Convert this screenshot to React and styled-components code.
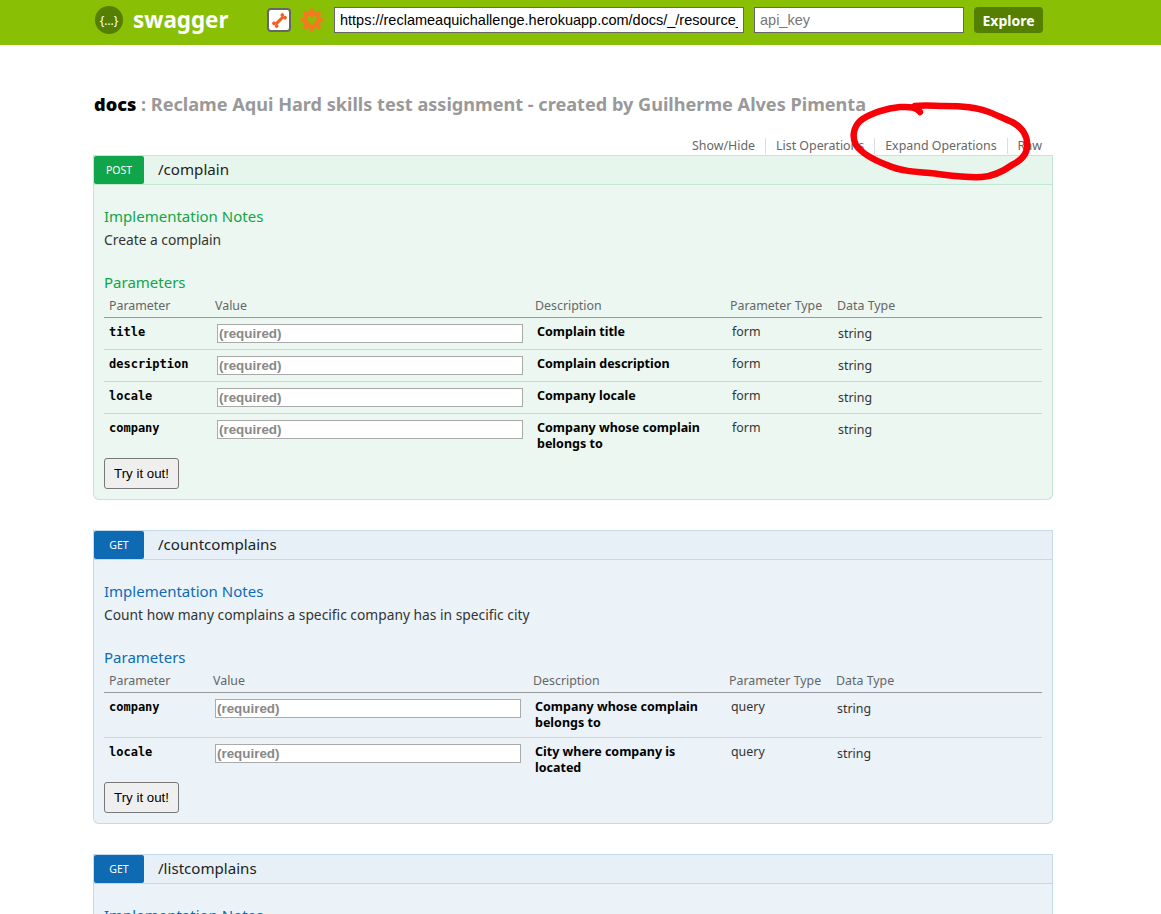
import React from 'react';
import styled, { createGlobalStyle } from 'styled-components';

const Global = createGlobalStyle`
html,body{margin:0;padding:0;background:#fff;}
body{font-family:"Noto Sans","Open Sans",sans-serif;height:914px;overflow:hidden;position:relative;}
`;

const Header = styled.div`
height:45px;
background:#89bf04;
display:flex;
align-items:center;
padding-left:95px;
box-sizing:border-box;
`;
const LogoMark = styled.div`
width:28px;height:28px;border-radius:50%;
background:#547f00;color:#fff;
display:flex;align-items:center;justify-content:center;
font-size:12px;
margin-right:10px;
margin-top:-5px;
`;
const LogoText = styled.div`
color:#fff;font-size:22.4px;font-weight:700;width:134px;margin-top:-5px;line-height:28px;
`;
const BoneBox = styled.div`
width:24px;height:24px;box-sizing:border-box;
background:#fff;border:2px solid #666;border-radius:4px;
display:flex;align-items:center;justify-content:center;
margin-right:9px;margin-top:-5px;
`;
const GearWrap = styled.div`
width:24px;height:24px;margin-right:10px;margin-top:-5px;
`;
const TopInput = styled.input`
height:26px;box-sizing:border-box;
width:${p=>p.$w}px;
margin-right:${p=>p.$mr}px;
margin-top:-5px;
border:1px solid #666;border-radius:0;padding:0 5px;
font-family:"Liberation Sans",Arial,sans-serif;font-size:14.5px;color:#000;background:#fff;
&::placeholder{color:#777;}
`;
const Explore = styled.div`
width:69px;height:26px;margin-top:-5px;
background:#547f00;color:#fff;border-radius:4px;
font-size:14px;font-weight:700;
display:flex;align-items:center;justify-content:center;
`;

const Content = styled.div`
width:960px;
margin-left:93px;
`;
const Title = styled.div`
margin-top:46px;
height:26px;
line-height:26px;
font-size:18.13px;
font-weight:700;
color:#999;
padding-left:1px;
white-space:nowrap;
& b{color:#000;}
`;
const OpsBar = styled.div`
display:flex;
justify-content:flex-end;
height:20px;
margin-top:18px;
margin-right:1px;
`;
const OpLink = styled.div`
font-size:12.4px;
line-height:16px;
height:16px;
margin-top:3px;
color:#666;
padding:0 10px;
border-right:1px solid #ddd;
&:last-child{border-right:none;}
`;

const colors = {
  post:{ head:'#e7f6ec', body:'#ebf7f0', border:'#c3e8d1', badge:'#10a54a', h:'#10a54a' },
  get:{ head:'#e7f0f7', body:'#ebf3f9', border:'#c3d9ec', badge:'#0f6ab4', h:'#0f6ab4' },
};

const Panel = styled.div`
margin-bottom:30px;
`;
const Head = styled.div`
display:flex;
height:30px;
box-sizing:border-box;
border:1px solid ${p=>colors[p.$m].border};
background:${p=>colors[p.$m].head};
`;
const Badge = styled.div`
width:50px;
height:28px;
background:${p=>colors[p.$m].badge};
color:#fff;
font-size:10.5px;
border-radius:2px;
display:flex;align-items:center;justify-content:center;
`;
const Path = styled.div`
margin-left:14px;
font-size:15.1px;
color:#222;
line-height:26px;
`;
const Body = styled.div`
background:${p=>colors[p.$m].body};
border:1px solid ${p=>colors[p.$m].border};
border-top:none;
border-radius:0 0 6px 6px;
padding:21px 10px 10px;
box-sizing:border-box;
height:${p=>p.$h}px;
`;
const Sub = styled.div`
font-size:15px;
line-height:20px;
color:${p=>colors[p.$m].h};
`;
const Notes = styled.div`
font-size:13.8px;
line-height:18px;
margin-top:5px;
color:#333;
margin-bottom:23px;
`;
const Row = styled.div`
display:grid;
grid-template-columns:${p=>p.$cols};
`;
const HeadRow = styled(Row)`
font-size:12.4px;
color:#666;
line-height:16px;
height:26px;
padding-top:6px;
box-sizing:border-box;
border-bottom:1px solid #999;
& > div{padding-left:5px;}
`;
const DataRow = styled(Row)`
min-height:${p=>p.$h}px;
box-sizing:border-box;
border-bottom:${p=>p.$last?'none':'1px solid #ccd5d0'};
padding-top:6px;
font-size:12.4px;
line-height:16px;
`;
const PName = styled.div`
font-family:"DejaVu Sans Mono",monospace;
font-weight:700;
font-size:12px;
color:#000;
padding-left:5px;
line-height:16px;
`;
const ValueCell = styled.div`
padding-left:7px;
`;
const Req = styled.input`
display:block;
width:306px;
height:19px;
margin:0;
box-sizing:border-box;
border:1px solid #aaa;
padding:0 1px;
background:#fff;
font-family:"Liberation Sans",Arial,sans-serif;
font-size:13.4px;
font-weight:700;
&::placeholder{color:#888;opacity:1;}
`;
const Desc = styled.div`
font-weight:700;
color:#000;
padding:0 22px 0 7px;
font-size:12.5px;
`;
const PType = styled.div`
color:#333;
padding-left:7px;
`;
const DType = styled.div`
color:#333;
padding-left:6px;
padding-top:2px;
`;
const TryIt = styled.div`
width:75px;height:31px;
box-sizing:border-box;
margin-top:6px;
border:1px solid #777;
border-radius:3px;
background:#efefef;
color:#000;
font-family:"Liberation Sans",Arial,sans-serif;
font-size:13.3px;
display:flex;align-items:center;justify-content:center;
`;
const Scribble = styled.svg`
position:absolute;
left:0;top:0;
pointer-events:none;
`;

const Gear = () => (
  <svg width="24" height="24" viewBox="0 0 24 24">
    <g fill="#f47a20">
      <circle cx="12" cy="12" r="8.5" />
      {[0,45,90,135,180,225,270,315].map(a => (
        <rect key={a} x="9.8" y="0.6" width="4.4" height="5" rx="1" transform={`rotate(${a} 12 12)`} />
      ))}
    </g>
    <path d="M12 17 L7.6 12.2 C6.4 10.4 8 8 10 8.4 C11 8.6 11.6 9.2 12 10 C12.4 9.2 13 8.6 14 8.4 C16 8 17.6 10.4 16.4 12.2 Z" fill="#89bf04" />
  </svg>
);
const Bone = () => (
  <svg width="17" height="17" viewBox="0 0 17 17">
    <g fill="#f0621e" transform="rotate(-45 8.5 8.5)">
      <rect x="3" y="7" width="11" height="3" />
      <circle cx="2.6" cy="6.6" r="1.9" /><circle cx="2.6" cy="10.4" r="1.9" />
      <circle cx="14.4" cy="6.6" r="1.9" /><circle cx="14.4" cy="10.4" r="1.9" />
    </g>
  </svg>
);

const Params = ({ cols, rows }) => (
  <>
    <HeadRow $cols={cols}>
      <div>Parameter</div><div>Value</div><div>Description</div><div>Parameter Type</div><div>Data Type</div>
    </HeadRow>
    {rows.map((r, i) => (
      <DataRow key={r.name} $cols={cols} $h={r.h} $last={i === rows.length - 1}>
        <PName>{r.name}</PName>
        <ValueCell><Req placeholder="(required)" /></ValueCell>
        <Desc>{r.desc}</Desc>
        <PType>{r.type}</PType>
        <DType>{r.data}</DType>
      </DataRow>
    ))}
  </>
);

const App = () => (
  <>
    <Global />
    <Header>
      <LogoMark>{'{…}'}</LogoMark>
      <LogoText>swagger</LogoText>
      <BoneBox><Bone /></BoneBox>
      <GearWrap><Gear /></GearWrap>
      <TopInput $w={410} $mr={10} defaultValue="https://reclameaquichallenge.herokuapp.com/docs/_/resource_" />
      <TopInput $w={210} $mr={10} placeholder="api_key" />
      <Explore>Explore</Explore>
    </Header>
    <Content>
      <Title><b>docs</b> : Reclame Aqui Hard skills test assignment - created by Guilherme Alves Pimenta</Title>
      <OpsBar>
        <OpLink>Show/Hide</OpLink>
        <OpLink>List Operations</OpLink>
        <OpLink>Expand Operations</OpLink>
        <OpLink>Raw</OpLink>
      </OpsBar>
      <Panel>
        <Head $m="post"><Badge $m="post">POST</Badge><Path>/complain</Path></Head>
        <Body $m="post" $h={315}>
          <Sub $m="post">Implementation Notes</Sub>
          <Notes>Create a complain</Notes>
          <Sub $m="post">Parameters</Sub>
          <Params cols="106px 320px 195px 107px 1fr" rows={[
            { name:'title', desc:'Complain title', type:'form', data:'string', h:32 },
            { name:'description', desc:'Complain description', type:'form', data:'string', h:32 },
            { name:'locale', desc:'Company locale', type:'form', data:'string', h:32 },
            { name:'company', desc:'Company whose complain belongs to', type:'form', data:'string', h:38 },
          ]} />
          <TryIt>Try it out!</TryIt>
        </Body>
      </Panel>
      <Panel>
        <Head $m="get"><Badge $m="get">GET</Badge><Path>/countcomplains</Path></Head>
        <Body $m="get" $h={264}>
          <Sub $m="get">Implementation Notes</Sub>
          <Notes>Count how many complains a specific company has in specific city</Notes>
          <Sub $m="get">Parameters</Sub>
          <Params cols="104px 320px 196px 107px 1fr" rows={[
            { name:'company', desc:'Company whose complain belongs to', type:'query', data:'string', h:45 },
            { name:'locale', desc:'City where company is located', type:'query', data:'string', h:38 },
          ]} />
          <TryIt>Try it out!</TryIt>
        </Body>
      </Panel>
      <Panel>
        <Head $m="get"><Badge $m="get">GET</Badge><Path>/listcomplains</Path></Head>
        <Body $m="get" $h={100}>
          <Sub $m="get">Implementation Notes</Sub>
        </Body>
      </Panel>
    </Content>
    <Scribble width="1161" height="914" viewBox="0 0 1161 914">
      <path d="M920 112 C 916 106 908 107 900 107 C 888 108 870 113 860 121 C 853 128 852 138 856 145 C 862 154 874 160 887 165 C 900 171 915 172 930 173 C 948 175 965 178 982 177 C 995 176 1005 170 1012 165 C 1020 161 1027 155 1027 146 C 1028 136 1022 127 1012 122 C 1002 118 995 114 986 111 C 975 107 960 106 945 106 C 935 106 925 105 915 106"
        fill="none" stroke="#f80008" strokeWidth="6.5" strokeLinecap="round" strokeLinejoin="round" />
    </Scribble>
  </>
);

export default App;
